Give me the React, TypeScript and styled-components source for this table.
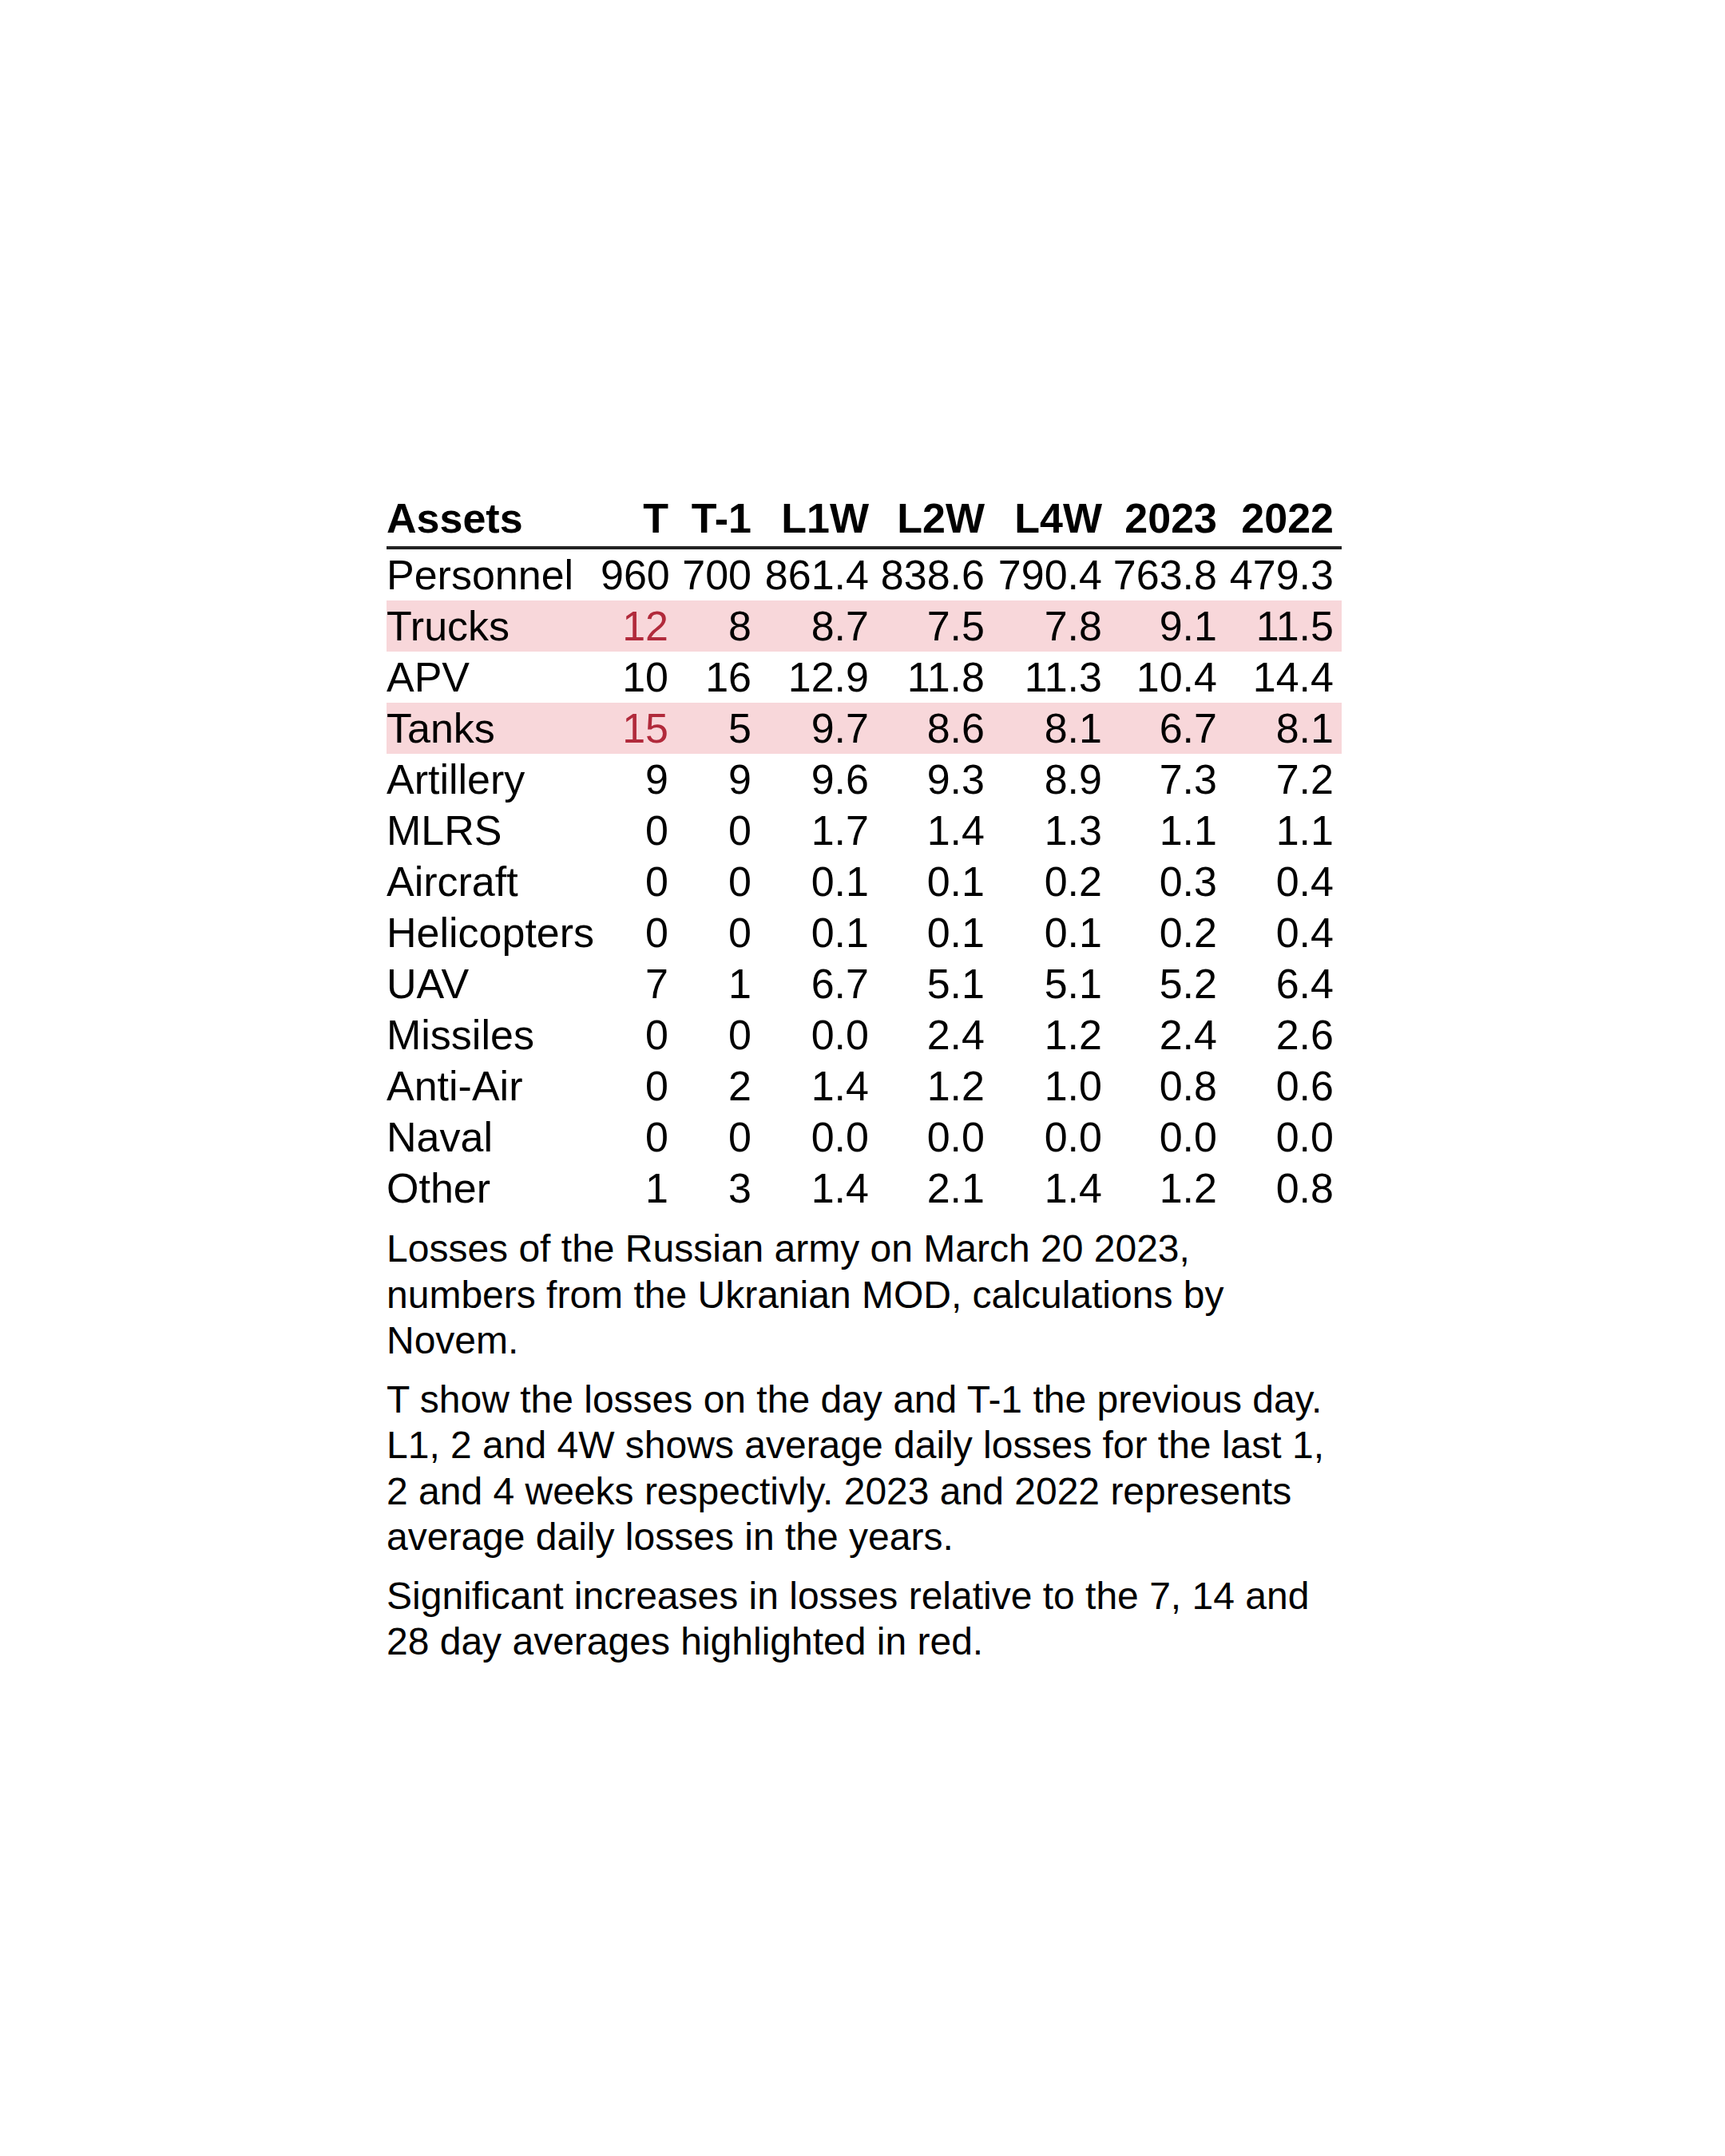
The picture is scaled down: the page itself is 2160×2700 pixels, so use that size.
import React from "react";
import styled, { createGlobalStyle } from "styled-components";

const GlobalStyle = createGlobalStyle`
  html, body {
    margin: 0;
    padding: 0;
    background: #ffffff;
  }
  body {
    font-family: "Liberation Sans", Arial, sans-serif;
    color: #000000;
  }
`;

const COLUMNS = "268px 85px 104px 147px 145px 147px 144px 146px";

const Page = styled.div`
  padding: 617px 0 0 484px;
  min-height: 2700px;
  box-sizing: border-box;
`;

const Report = styled.div`
  width: 1196px;
  display: flex;
  flex-direction: column;
`;

const Table = styled.div`
  display: flex;
  flex-direction: column;
`;

const Row = styled.div<{ $highlight?: boolean }>`
  display: grid;
  grid-template-columns: ${COLUMNS};
  padding-right: 10px;
  height: 64px;
  line-height: 64px;
  font-size: 52px;
  white-space: nowrap;
  background: ${(p) => (p.$highlight ? "#f8d7da" : "transparent")};
`;

const HeaderRow = styled(Row)`
  font-weight: 700;
  padding-bottom: 3px;
  border-bottom: 4px solid #222222;
`;

const LabelCell = styled.div`
  text-align: left;
`;

const NumCell = styled.div<{ $alert?: boolean }>`
  text-align: right;
  color: ${(p) => (p.$alert ? "#b12a3b" : "inherit")};
`;

const Notes = styled.div`
  margin-top: 15px;
  display: flex;
  flex-direction: column;
  gap: 16px;
`;

const Note = styled.p`
  margin: 0;
  font-size: 48px;
  line-height: 57.5px;
`;

type Asset = {
  name: string;
  values: string[];
  highlight?: boolean;
  alert?: number[];
};

const headers = ["T", "T-1", "L1W", "L2W", "L4W", "2023", "2022"];

const assets: Asset[] = [
  { name: "Personnel", values: ["960", "700", "861.4", "838.6", "790.4", "763.8", "479.3"] },
  { name: "Trucks", values: ["12", "8", "8.7", "7.5", "7.8", "9.1", "11.5"], highlight: true, alert: [0] },
  { name: "APV", values: ["10", "16", "12.9", "11.8", "11.3", "10.4", "14.4"] },
  { name: "Tanks", values: ["15", "5", "9.7", "8.6", "8.1", "6.7", "8.1"], highlight: true, alert: [0] },
  { name: "Artillery", values: ["9", "9", "9.6", "9.3", "8.9", "7.3", "7.2"] },
  { name: "MLRS", values: ["0", "0", "1.7", "1.4", "1.3", "1.1", "1.1"] },
  { name: "Aircraft", values: ["0", "0", "0.1", "0.1", "0.2", "0.3", "0.4"] },
  { name: "Helicopters", values: ["0", "0", "0.1", "0.1", "0.1", "0.2", "0.4"] },
  { name: "UAV", values: ["7", "1", "6.7", "5.1", "5.1", "5.2", "6.4"] },
  { name: "Missiles", values: ["0", "0", "0.0", "2.4", "1.2", "2.4", "2.6"] },
  { name: "Anti-Air", values: ["0", "2", "1.4", "1.2", "1.0", "0.8", "0.6"] },
  { name: "Naval", values: ["0", "0", "0.0", "0.0", "0.0", "0.0", "0.0"] },
  { name: "Other", values: ["1", "3", "1.4", "2.1", "1.4", "1.2", "0.8"] },
];

function LossesTable() {
  return (
    <Table>
      <HeaderRow>
        <LabelCell>Assets</LabelCell>
        {headers.map((h) => (
          <NumCell key={h}>{h}</NumCell>
        ))}
      </HeaderRow>
      {assets.map((a) => (
        <Row key={a.name} $highlight={a.highlight}>
          <LabelCell>{a.name}</LabelCell>
          {a.values.map((v, i) => (
            <NumCell key={i} $alert={a.alert?.includes(i)}>
              {v}
            </NumCell>
          ))}
        </Row>
      ))}
    </Table>
  );
}

export default function App() {
  return (
    <>
      <GlobalStyle />
      <Page>
        <Report>
          <LossesTable />
          <Notes>
            <Note>
              Losses of the Russian army on March 20 2023, numbers from the
              Ukranian MOD, calculations by Novem.
            </Note>
            <Note>
              T show the losses on the day and T-1 the previous day. L1, 2 and
              4W shows average daily losses for the last 1, 2 and 4 weeks
              respectivly. 2023 and 2022 represents average daily losses in the
              years.
            </Note>
            <Note>
              Significant increases in losses relative to the 7, 14 and 28 day
              averages highlighted in red.
            </Note>
          </Notes>
        </Report>
      </Page>
    </>
  );
}
